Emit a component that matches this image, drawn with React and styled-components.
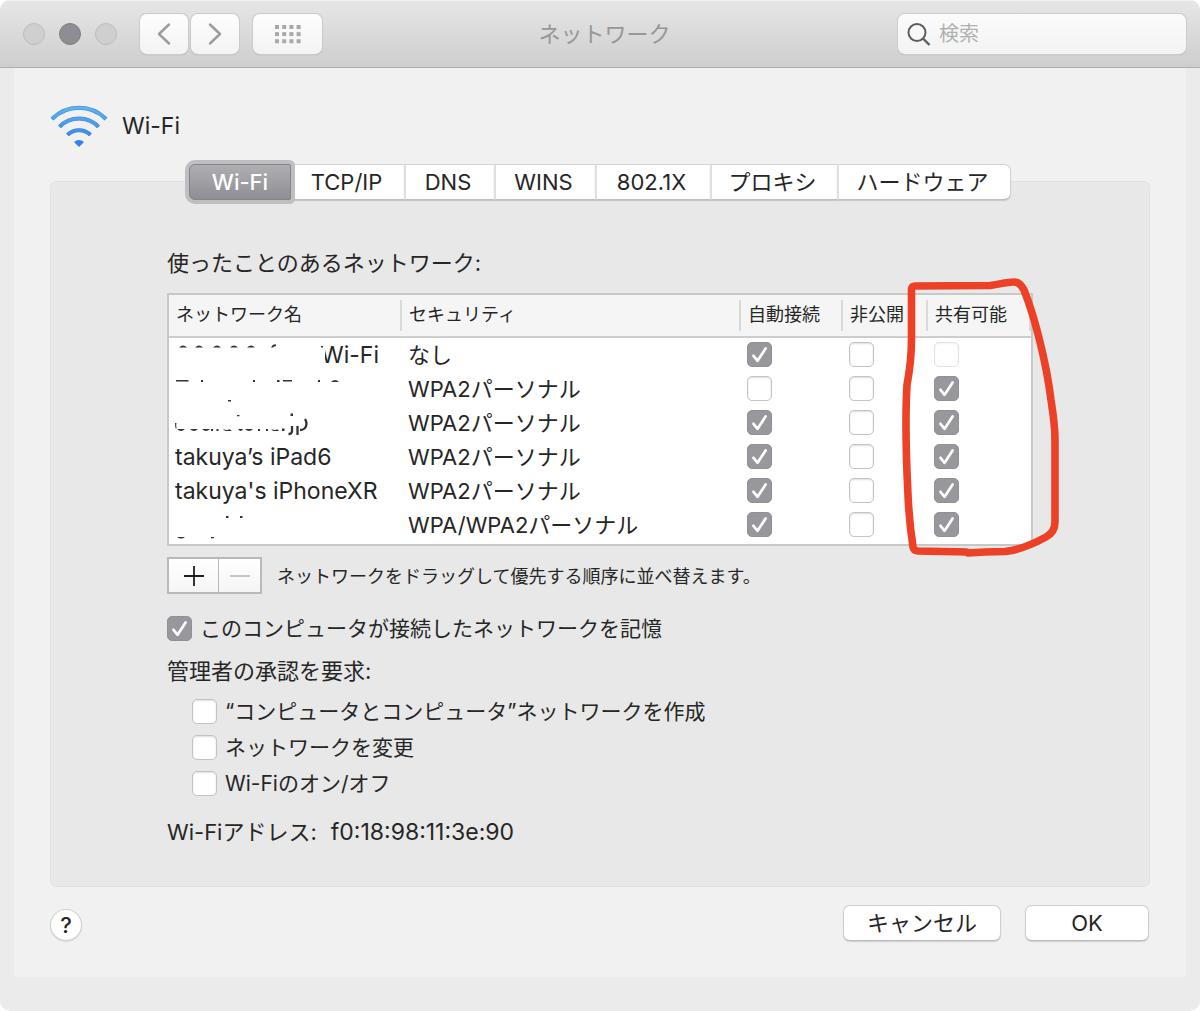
import React, { useState } from "react";
import styled, { createGlobalStyle, css } from "styled-components";

const GlobalStyle = createGlobalStyle`
  *, *::before, *::after { box-sizing: border-box; }
  body {
    margin: 0;
    background: #ffffff;
    color: #262626;
    font-family: Inter, "Noto Sans CJK JP", sans-serif;
    font-size: 22px;
    line-height: 30px;
  }
  button, input { font: inherit; color: inherit; }
`;

const Window = styled.main`
  display: flex;
  flex-direction: column;
  min-height: 100vh;
  overflow: hidden;
  border-radius: 10px;
  background: #ebebeb;
`;

const TitleBar = styled.header`
  display: grid;
  grid-template-columns: 1fr auto 1fr;
  align-items: center;
  height: 68px;
  padding: 0 14px 0 23px;
  border-top: 1px solid #f2f2f2;
  border-bottom: 1px solid #aeaeae;
  background: linear-gradient(#e6e6e6, #cecece);
`;

const ToolGroup = styled.div`
  display: flex;
  align-items: center;
`;

const Lights = styled.div`
  display: flex;
  gap: 14px;
  margin-right: 23px;
`;

const Light = styled.button`
  width: 22px;
  height: 22px;
  padding: 0;
  border: 1px solid ${(p) => (p.$active ? "#7f7e83" : "#bcbcbc")};
  border-radius: 50%;
  background: ${(p) => (p.$active ? "#8e8d92" : "#cfcfcf")};
`;

const ToolButton = styled.button`
  display: grid;
  place-items: center;
  width: ${(p) => (p.$wide ? "69px" : "48px")};
  height: 40px;
  margin-right: ${(p) => p.$gap || "0"};
  padding: 0;
  border: 0;
  border-radius: 7px;
  background: linear-gradient(#fdfdfd, #f3f3f3);
  box-shadow: 0 0 0 1px #cacaca, 0 1px 1px #999999;
`;

const Title = styled.h1`
  margin: 0;
  color: #979797;
  font-size: 22px;
  font-weight: 400;
`;

const SearchBox = styled.label`
  display: flex;
  align-items: center;
  justify-self: end;
  gap: 8px;
  width: 288px;
  height: 40px;
  padding: 0 10px 0 9px;
  border-radius: 7px;
  background: linear-gradient(#fbfbfb, #f3f3f3);
  box-shadow: 0 0 0 1px #cccccc, 0 1px 1px #999999;
`;

const SearchInput = styled.input`
  flex: 1;
  min-width: 0;
  padding: 0;
  border: 0;
  outline: 0;
  background: transparent;
  font-size: 20px;
  &::placeholder { color: #b0b0b0; opacity: 1; }
`;

const Content = styled.div`
  flex: 1;
  margin: 0 14px 34px;
  padding: 36px 36px 36px;
  background: #f1f1f1;
`;

const Service = styled.div`
  display: flex;
  align-items: center;
  gap: 14px;
  height: 44px;
`;

const ServiceName = styled.h2`
  margin: 0;
  font-size: 23px;
  font-weight: 400;
`;

const Tabs = styled.div`
  position: relative;
  display: grid;
  grid-template-columns: 102px 113px 90px 101px 115px 127px 174px;
  justify-content: center;
  height: 36px;
  margin: 16px 0 -19px;
`;

const Tab = styled.button`
  padding: 0 4px 0 0;
  border: solid #d2d2d2;
  border-width: 1px 0 1px 2px;
  border-color: #d2d2d2 #e0e0e0 #bdbdbd #e0e0e0;
  background: #ffffff;
  box-shadow: 0 1px 1px #c6c6c6;
  &:last-child {
    border-right: 1px solid #d2d2d2;
    border-radius: 0 7px 7px 0;
  }
  ${(p) =>
    p.$active &&
    css`
      z-index: 1;
      padding: 0;
      border: 0;
      border-radius: 6px 2px 2px 6px;
      background: linear-gradient(#b0afb4, #8e8d92);
      box-shadow: 0 0 0 4px #bfbfc1;
      outline: 1px solid #85848a;
      outline-offset: -1px;
      color: #ffffff;
      font-weight: 500;
    `}
`;

const Panel = styled.section`
  padding: 66px 116px 39px;
  border: 1px solid #e2e2e2;
  border-radius: 6px;
  background: #e8e8e8;
`;

const Caption = styled.p`
  margin: 0;
`;

const TableArea = styled.div`
  position: relative;
  margin-top: 15px;
`;

const NetworkTable = styled.table`
  width: 100%;
  padding-bottom: 2px;
  border: 2px solid #c8c8c8;
  border-spacing: 0;
  table-layout: fixed;
  background: #ffffff;
`;

const Col = styled.col`
  width: ${(p) => p.$w || "auto"};
`;

const HeadCell = styled.th`
  height: 43px;
  padding: 0 0 1px;
  border-bottom: 2px solid #cdcdcd;
  background: #f5f5f5;
  font-size: 18px;
  font-weight: 400;
  text-align: left;
  white-space: nowrap;
`;

const HeadLabel = styled.span`
  display: block;
  height: 31px;
  padding-left: 7px;
  line-height: 30px;
  border-right: ${(p) => (p.$rule ? "2px solid #d9d9d9" : "0")};
`;

const Cell = styled.td`
  height: 34px;
  padding: 0 0 0 6px;
  line-height: 34px;
  white-space: nowrap;
`;

const NameCell = styled(Cell)`
  font-size: 23px;
`;

const CheckCell = styled(Cell)`
  padding-bottom: 1px;
`;

const NameBox = styled.div`
  display: grid;
  height: 34px;
  > * { grid-area: 1 / 1; }
`;

const PartialName = styled.span`
  padding-left: 146px;
  clip-path: inset(0 0 0 150px);
`;

const Annotation = styled.svg`
  position: absolute;
  top: -17px;
  right: -29px;
  pointer-events: none;
`;

const CheckWrap = styled.span`
  display: grid;
  width: 25px;
  height: 25px;
  flex: none;
  > * { grid-area: 1 / 1; }
  > svg { z-index: 1; pointer-events: none; }
`;

const CheckInput = styled.input`
  appearance: none;
  width: 25px;
  height: 25px;
  margin: 0;
  border: 1px solid #c3c3c3;
  border-radius: 5px;
  background: #ffffff;
  box-shadow: inset 0 1px 2px #dddddd;
  &:checked {
    border-color: #919096;
    background: #98979c;
    box-shadow: none;
  }
  &:disabled { border-color: #e2e2e2; box-shadow: inset 0 1px 2px #f3f3f3; }
`;

const Actions = styled.div`
  display: flex;
  align-items: center;
  gap: 15px;
  margin-top: 11px;
`;

const AddRemove = styled.div`
  display: flex;
  height: 37px;
  border: 2px solid #b9b9b9;
`;

const SquareButton = styled.button`
  display: grid;
  place-items: center;
  width: ${(p) => (p.$first ? "50px" : "41px")};
  padding: 0;
  border: 0;
  border-right: ${(p) => (p.$first ? "1px solid #b9b9b9" : "0")};
  background: linear-gradient(#ffffff, #f5f5f5);
`;

const Hint = styled.p`
  margin: 0;
  padding-top: 2px;
  font-size: 18px;
`;

const CheckLabel = styled.label`
  display: flex;
  align-items: center;
  gap: 8px;
  height: 25px;
  font-size: 21px;
`;

const Remember = styled.div`
  margin: 22px 0 15px;
`;

const OptionList = styled.div`
  display: flex;
  flex-direction: column;
  gap: 11px;
  margin: 13px 0 21px;
  padding-left: 25px;
`;

const Address = styled.dl`
  display: flex;
  gap: 14px;
  margin: 0;
`;

const AddressValue = styled.dd`
  margin: 0;
  font-size: 23px;
`;

const Footer = styled.footer`
  display: flex;
  align-items: center;
  gap: 24px;
  margin-top: 18px;
  padding: 0 1px;
`;

const HelpButton = styled.button`
  width: 30px;
  height: 30px;
  margin: 4px auto 0 0;
  padding: 0;
  border: 0;
  border-radius: 50%;
  background: #ffffff;
  box-shadow: 0 0 0 1px #d2d2d2, 0 1px 2px #a9a9a9;
  font-weight: 500;
  line-height: 30px;
`;

const PushButton = styled.button`
  width: ${(p) => p.$w};
  height: 36px;
  padding: 0;
  border: 1px solid #cfcfcf;
  border-bottom-color: #bdbdbd;
  border-radius: 7px;
  background: #ffffff;
  box-shadow: 0 1px 1px #cecece;
`;

function Check({ initial, ...rest }) {
  const [on, setOn] = useState(Boolean(initial));
  return (
    <CheckWrap>
      <CheckInput
        type="checkbox"
        checked={on}
        onChange={(e) => setOn(e.target.checked)}
        {...rest}
      />
      {on && (
        <svg width="25" height="25" viewBox="0 0 25 25" fill="none" aria-hidden="true">
          <path
            d="M6.5 13.8 L10.6 18.8 L18.6 6.4"
            stroke="#ffffff"
            strokeWidth="2.7"
            strokeLinecap="round"
            strokeLinejoin="round"
          />
        </svg>
      )}
    </CheckWrap>
  );
}

/* Strokes left uncovered in the erased network names. */
const remnants = {
  a: "M4 9.5 q4 -4 8 0z M20 9.5 q4 -4 8 0z M38 9.5 q4 -4 8 0z M55 9.5 q4 -4 8 0z M72 9.5 q4 -4 8 0z M96 9.5 q2 -4 5 -3 v1.500 q-2 0 -3 1.500z M146 8 h2 v1.500 h-2z",
  b: "M1 8 h12.500 v1.500 h-12.500z M26 8 h2 v2 h-2z M78 8 h2 v2 h-2z M102 8 h2.500 v2 h-2.500z M108 8 h9 v1.500 h-9z M143 8 h2 v2 h-2z M156 10 q4 -4 8 0z M53 28 h3 v1.500 h-3z",
  c: "M0 17 q0 4 1 6 l0.500 -1 q-0.500 -3 0 -5z M2 23 q4 4 8 0z M15 23 q4 4 8 0z M27 23 q4 4 8 0z M36 23 h2 v2 h-2z M41.500 23 h2 v2 h-2z M48 23 q3 4 6 0 l3 2 h-3z M63 23 q3 4 5 0z M70 23 q4 4 8 0z M83 23 h2 v2 h-2z M91 23 h2 v2 h-2z M96 23 q3 4 6 0 l2 2 h-2z M107 22.500 h2.500 v2.500 h-2.500z M62 9 h2.500 v1.200 h-2.500z M115.500 7.500 h2.500 v2.500 h-2.500z",
  d: "M51 8 h2.500 v2 h-2.500z M65 8 h2.500 v2 h-2.500z M2 29 h8 q-4 3 -8 0z M36 29 h3 v1.200 h-3z",
};

function Remnant({ id }) {
  return (
    <svg width="180" height="34" viewBox="0 0 180 34" overflow="visible" aria-hidden="true">
      <path d={remnants[id]} fill="#333333" />
      {id === "c" && (
        <path
          d="M117 20 v5 q0 3 -3.500 3 M122.500 20 v9 M125 24 q6 0 6.500 -6 q0 -3 -1.500 -5"
          stroke="#333333"
          strokeWidth="2.3"
          fill="none"
        />
      )}
    </svg>
  );
}

const rows = [
  { mark: "a", name: "Wi-Fi", security: "なし", auto: true, share: false, locked: true },
  { mark: "b", security: "WPA2パーソナル", auto: false, share: true },
  { mark: "c", security: "WPA2パーソナル", auto: true, share: true },
  { name: "takuya’s iPad6", security: "WPA2パーソナル", auto: true, share: true },
  { name: "takuya's iPhoneXR", security: "WPA2パーソナル", auto: true, share: true },
  { mark: "d", security: "WPA/WPA2パーソナル", auto: true, share: true },
];

const tabs = ["Wi-Fi", "TCP/IP", "DNS", "WINS", "802.1X", "プロキシ", "ハードウェア"];

const options = ["“コンピュータとコンピュータ”ネットワークを作成", "ネットワークを変更", "Wi-Fiのオン/オフ"];

function NetworkRow({ row, index }) {
  const label = row.name || `ネットワーク${index + 1}`;
  return (
    <tr>
      <NameCell>
        {row.mark ? (
          <NameBox>
            <Remnant id={row.mark} />
            {row.name && <PartialName>{row.name}</PartialName>}
          </NameBox>
        ) : (
          row.name
        )}
      </NameCell>
      <Cell>{row.security}</Cell>
      <CheckCell><Check initial={row.auto} aria-label={`${label} 自動接続`} /></CheckCell>
      <CheckCell><Check aria-label={`${label} 非公開`} /></CheckCell>
      <CheckCell>
        <Check initial={row.share} disabled={row.locked} aria-label={`${label} 共有可能`} />
      </CheckCell>
    </tr>
  );
}

export default function App() {
  const [tab, setTab] = useState(0);
  return (
    <>
      <GlobalStyle />
      <Window>
        <TitleBar>
          <ToolGroup>
            <Lights>
              <Light aria-label="閉じる" />
              <Light $active aria-label="しまう" />
              <Light aria-label="拡大" />
            </Lights>
            <ToolButton $gap="3px" aria-label="戻る">
              <svg width="14" height="24" viewBox="0 0 14 24" fill="none">
                <path d="M12 2.500 L2 12 L12 21.500" stroke="#9d9d9d" strokeWidth="2.5" strokeLinecap="round" strokeLinejoin="round" />
              </svg>
            </ToolButton>
            <ToolButton $gap="14px" aria-label="進む">
              <svg width="14" height="24" viewBox="0 0 14 24" fill="none">
                <path d="M2 2.500 L12 12 L2 21.500" stroke="#9d9d9d" strokeWidth="2.5" strokeLinecap="round" strokeLinejoin="round" />
              </svg>
            </ToolButton>
            <ToolButton $wide aria-label="すべてを表示">
              <svg width="26" height="20" viewBox="0 0 26 20" fill="#a9a9a9">
                {[0, 1, 2].map((r) =>
                  [0, 1, 2, 3].map((c) => (
                    <rect key={`${r}-${c}`} x={c * 7.2} y={1 + r * 7.1} width="4" height="4" />
                  ))
                )}
              </svg>
            </ToolButton>
          </ToolGroup>
          <Title>ネットワーク</Title>
          <SearchBox>
            <svg width="24" height="24" viewBox="0 0 24 24" fill="none" stroke="#5d5d5d" strokeWidth="2" aria-hidden="true">
              <circle cx="10" cy="10.500" r="8.500" />
              <path d="M16 16.500 L22.500 23" strokeWidth="2.4" />
            </svg>
            <SearchInput type="search" placeholder="検索" aria-label="検索" />
          </SearchBox>
        </TitleBar>

        <Content>
          <Service>
            <svg width="58" height="44" viewBox="0 0 58 44" fill="none" aria-hidden="true">
              <defs>
                <linearGradient id="wifi" x1="0" y1="0" x2="0" y2="44" gradientUnits="userSpaceOnUse">
                  <stop offset="0" stopColor="#5fb9f3" />
                  <stop offset="1" stopColor="#2f77ee" />
                </linearGradient>
              </defs>
              <g stroke="#3f86c4" strokeWidth="4">
                <path d="M2 15 A38 38 0 0 1 56 15" />
                <path d="M9.500 22.800 A27 27 0 0 1 48.500 22.800" />
                <path d="M17.500 30.800 A16.500 16.500 0 0 1 40.500 30.800" />
              </g>
              <g stroke="url(#wifi)" strokeWidth="3">
                <path d="M2 15 A38 38 0 0 1 56 15" />
                <path d="M9.500 22.800 A27 27 0 0 1 48.500 22.800" />
                <path d="M17.500 30.800 A16.500 16.500 0 0 1 40.500 30.800" />
              </g>
              <path d="M24 38 Q29 34 34 38 L29 43 Z" fill="#3380f2" />
            </svg>
            <ServiceName>Wi-Fi</ServiceName>
          </Service>

          <Tabs role="tablist">
            {tabs.map((t, i) => (
              <Tab key={t} role="tab" aria-selected={tab === i} $active={tab === i} onClick={() => setTab(i)}>
                {t}
              </Tab>
            ))}
          </Tabs>

          <Panel>
            <Caption>使ったことのあるネットワーク:</Caption>
            <TableArea>
              <NetworkTable>
                <colgroup>
                  <Col $w="233px" />
                  <Col />
                  <Col $w="102px" />
                  <Col $w="85px" />
                  <Col $w="103px" />
                </colgroup>
                <thead>
                  <tr>
                    <HeadCell><HeadLabel $rule>ネットワーク名</HeadLabel></HeadCell>
                    <HeadCell><HeadLabel $rule>セキュリティ</HeadLabel></HeadCell>
                    <HeadCell><HeadLabel $rule>自動接続</HeadLabel></HeadCell>
                    <HeadCell><HeadLabel $rule>非公開</HeadLabel></HeadCell>
                    <HeadCell><HeadLabel $rule>共有可能</HeadLabel></HeadCell>
                  </tr>
                </thead>
                <tbody>
                  {rows.map((row, i) => (
                    <NetworkRow key={i} row={row} index={i} />
                  ))}
                </tbody>
              </NetworkTable>
              <Annotation width="162" height="282" viewBox="900 276 162 282" fill="none" aria-hidden="true">
                <path
                  d="M966 552 C948 551.500 930 551 918 551 Q913.500 550.500 913 547 Q909 520 908 495 C906 455 905.500 410 907 385 Q911.500 360 911.500 340 L911.500 289 Q912 286 915 286 L990 285.500 C1000 284 1008 282 1014 282 Q1020 282 1024 290 C1034 315 1046 360 1051 400 Q1055 425 1055 440 L1055 522 Q1055 532 1046 537 C1035 543 1020 550 1005 551.500 L985 552 L968 553"
                  stroke="#ec4027"
                  strokeWidth="7.6"
                  strokeLinecap="round"
                  strokeLinejoin="round"
                />
              </Annotation>
            </TableArea>

            <Actions>
              <AddRemove>
                <SquareButton $first aria-label="追加">
                  <svg width="20" height="20" viewBox="0 0 20 20" stroke="#1f1f1f" strokeWidth="1.8">
                    <path d="M0 10 H20 M10 0 V20" />
                  </svg>
                </SquareButton>
                <SquareButton disabled aria-label="削除">
                  <svg width="20" height="20" viewBox="0 0 20 20" stroke="#b9b9b9" strokeWidth="1.6">
                    <path d="M0 10 H20" />
                  </svg>
                </SquareButton>
              </AddRemove>
              <Hint>ネットワークをドラッグして優先する順序に並べ替えます。</Hint>
            </Actions>

            <Remember>
              <CheckLabel>
                <Check initial />
                このコンピュータが接続したネットワークを記憶
              </CheckLabel>
            </Remember>
            <Caption>管理者の承認を要求:</Caption>
            <OptionList>
              {options.map((o) => (
                <CheckLabel key={o}>
                  <Check />
                  {o}
                </CheckLabel>
              ))}
            </OptionList>
            <Address>
              <dt>Wi-Fiアドレス:</dt>
              <AddressValue>f0:18:98:11:3e:90</AddressValue>
            </Address>
          </Panel>

          <Footer>
            <HelpButton aria-label="ヘルプ">?</HelpButton>
            <PushButton $w="158px">キャンセル</PushButton>
            <PushButton $w="124px">OK</PushButton>
          </Footer>
        </Content>
      </Window>
    </>
  );
}
